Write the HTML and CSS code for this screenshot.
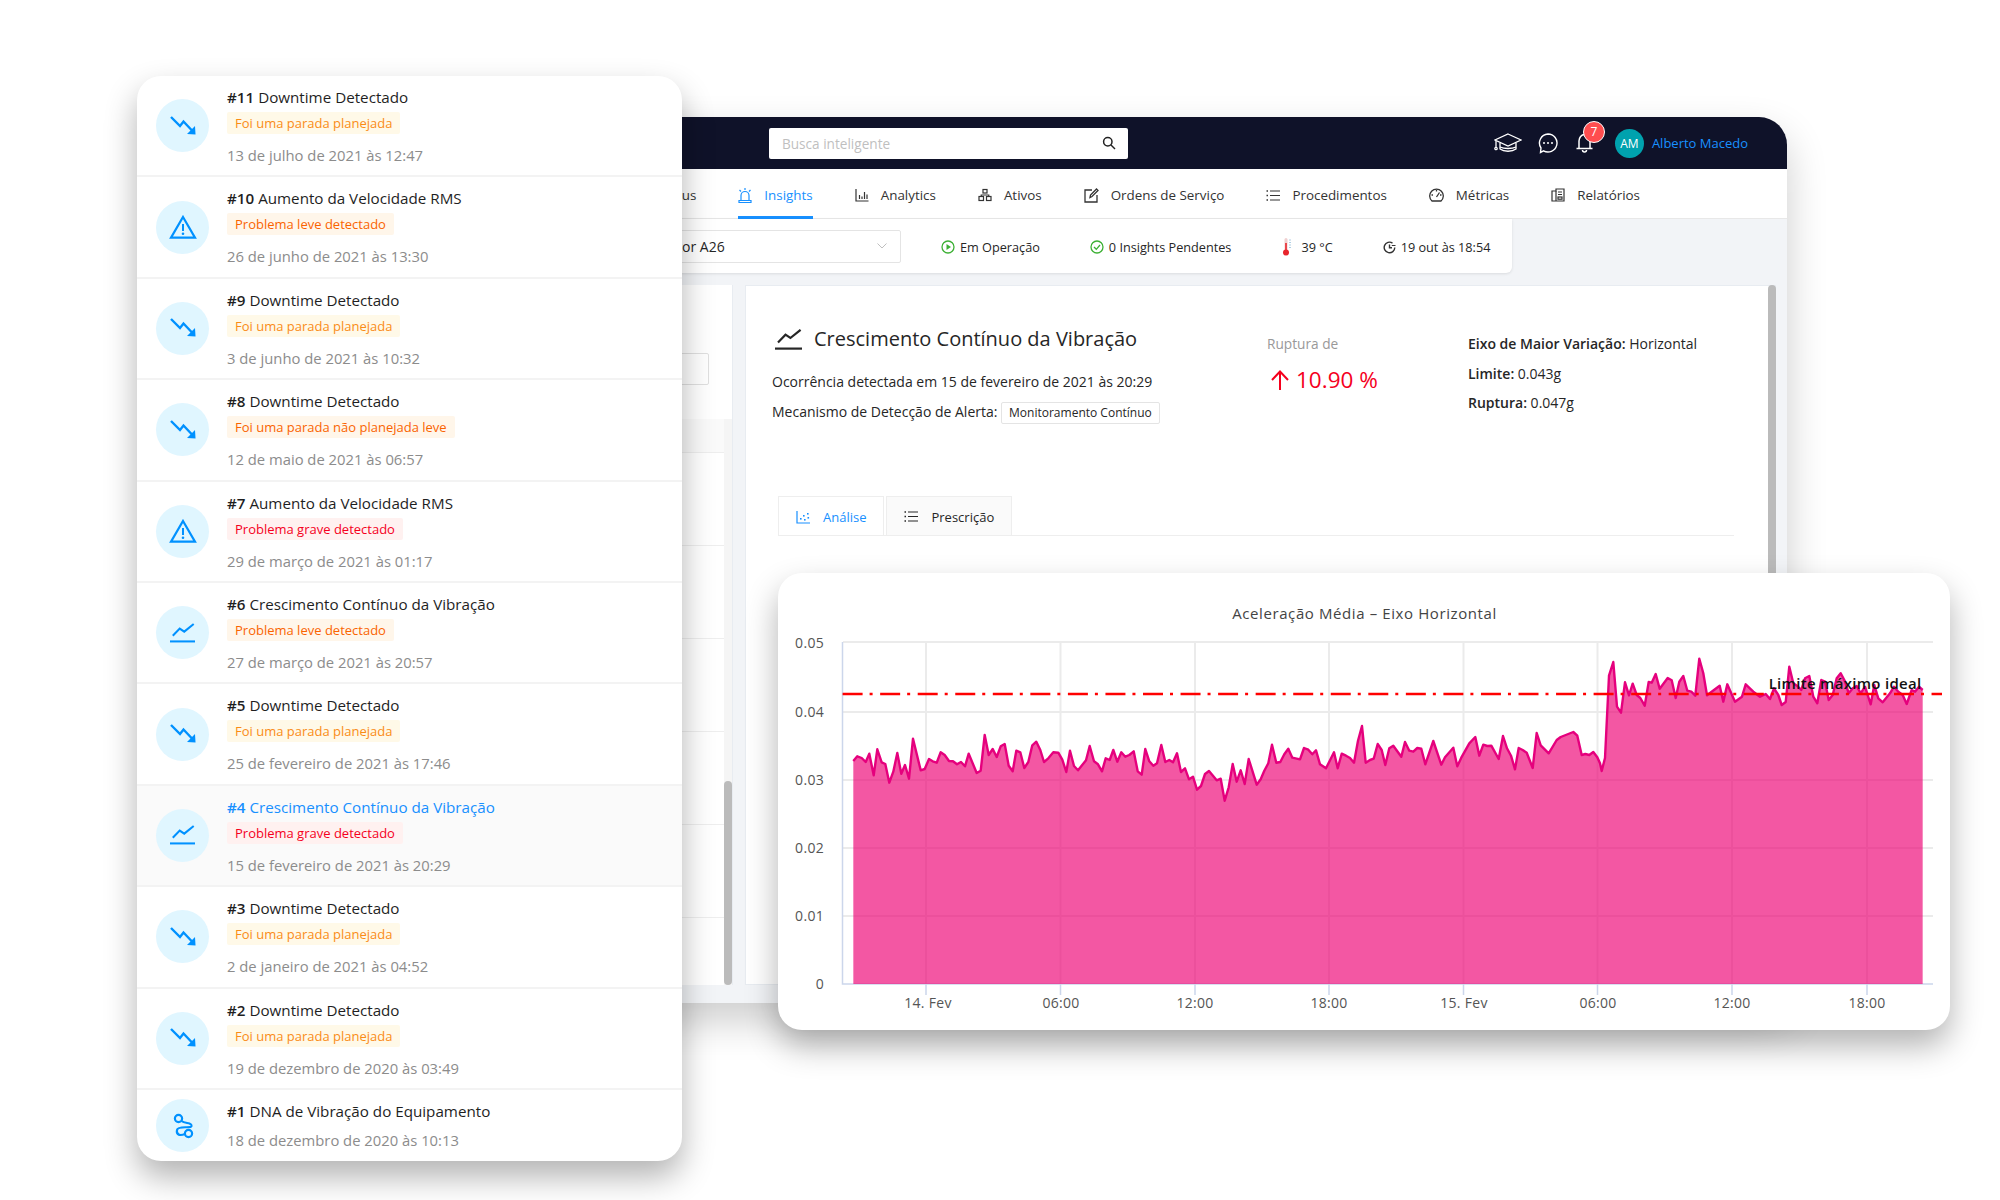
FILE: index.html
```html
<!DOCTYPE html>
<html lang="pt-BR">
<head>
    <meta charset="UTF-8">
    <title>Insights</title>
    <link rel="stylesheet" href="styles.css">
</head>
<body>
    <svg class="defs" width="0" height="0">
        <symbol id="i-down" viewBox="0 0 26 20">
            <polyline points="1,1 10,10 13.5,5.5 22,14.5" fill="none" stroke="currentColor" stroke-width="2.4"/>
            <polygon points="25.5,18.5 17,18 25,10" fill="currentColor"/>
        </symbol>
        <symbol id="i-warn" viewBox="0 0 28 24">
            <path d="M14 2 L26 22.6 H2 Z" fill="none" stroke="currentColor" stroke-width="2.2"/>
            <rect x="13" y="9" width="2" height="7" fill="currentColor"/>
            <circle cx="14" cy="18.8" r="1.3" fill="currentColor"/>
        </symbol>
        <symbol id="i-growth" viewBox="0 0 27 21">
            <path d="M0 19.6 H27" fill="none" stroke="currentColor" stroke-width="2.2"/>
            <polyline points="3,13.5 10.5,5.7 15.4,9 25.6,0.8" fill="none" stroke="currentColor" stroke-width="2.2"/>
        </symbol>
        <symbol id="i-dna" viewBox="0 0 22 26">
            <circle cx="6.5" cy="5.5" r="3.6" fill="none" stroke="currentColor" stroke-width="2.2"/>
            <circle cx="16.5" cy="20.5" r="3.6" fill="none" stroke="currentColor" stroke-width="2.2"/>
            <path d="M9.5 8 C13 11 20 9 19.5 13 C19 16 6 12 5 17 C4 22 8 23 13 21" fill="none" stroke="currentColor" stroke-width="2.2"/>
        </symbol>
    </svg>

    <!-- janela principal, atras da lista e do grafico -->
    <section class="dash">
        <header class="topbar">
            <div class="search">
                <span>Busca inteligente</span>
                <svg width="14" height="14" viewBox="0 0 14 14" fill="none" stroke="#222" stroke-width="1.5"><circle cx="5.8" cy="5.8" r="4.2"/><path d="M9 9 L13 13"/></svg>
            </div>
            <div class="topbar-right">
                <svg class="cap" width="28" height="20" viewBox="0 0 28 20" fill="none" stroke="#fff" stroke-width="1.3"><path d="M14 1 L27 7 L14 13 L1 7 Z"/><path d="M6 10 V16 C10 19 18 19 22 16 V10"/><path d="M6 14 C10 16 18 16 22 14"/><path d="M2 7.5 V14"/><circle cx="2" cy="15.5" r="1.2"/></svg>
                <svg class="chat" width="20" height="21" viewBox="0 0 20 21" fill="none" stroke="#fff" stroke-width="1.4"><path d="M10 1 A9 9 0 1 1 5.5 17.8 L2.5 19.5 L3 15 A9 9 0 0 1 10 1 Z"/><g fill="#fff" stroke="none"><circle cx="6" cy="10" r="1"/><circle cx="10" cy="10" r="1"/><circle cx="14" cy="10" r="1"/></g></svg>
                <div class="bell">
                    <svg width="17" height="20" viewBox="0 0 17 20" fill="none" stroke="#fff" stroke-width="1.5"><path d="M3 15 V8 A5.5 6.5 0 0 1 14 8 V15"/><path d="M0.5 15.5 H16.5"/><path d="M6.5 17 A2 2 0 0 0 10.5 17"/></svg>
                    <span class="badge">7</span>
                </div>
                <span class="avatar">AM</span>
                <span class="username">Alberto Macedo</span>
            </div>
        </header>

        <nav class="nav">
            <a class="nav-item">Status</a>
            <a class="nav-item active">
                <svg width="14" height="15" viewBox="0 0 14 15" fill="none" stroke="currentColor" stroke-width="1.2"><path d="M3 12 V7.5 A4 4 0 0 1 11 7.5 V12"/><path d="M1 12.5 H13 V14.5 H1 Z"/><path d="M7 0 V2 M1.5 2 L3 3.5 M12.5 2 L11 3.5"/></svg>
                Insights
            </a>
            <a class="nav-item">
                <svg width="14" height="14" viewBox="0 0 14 14" fill="none" stroke="currentColor" stroke-width="1.2"><path d="M1 1 V13 H13.5"/><path d="M4.5 11 V7 M7 11 V8.5 M9.5 11 V4 M12 11 V6.5"/></svg>
                Analytics
            </a>
            <a class="nav-item">
                <svg width="14" height="14" viewBox="0 0 14 14" fill="none" stroke="currentColor" stroke-width="1.2"><rect x="5" y="1.5" width="4" height="3.5"/><rect x="1" y="8.5" width="4.5" height="4"/><rect x="8.5" y="8.5" width="4.5" height="4"/><path d="M3.2 8.5 V7 H10.8 V8.5"/></svg>
                Ativos
            </a>
            <a class="nav-item">
                <svg width="15" height="15" viewBox="0 0 15 15" fill="none" stroke="currentColor" stroke-width="1.3"><path d="M8 2 H1 V14 H13 V7"/><path d="M6 9.5 L6.5 7 L12.5 1 L14 2.5 L8 8.5 Z"/></svg>
                Ordens de Serviço
            </a>
            <a class="nav-item">
                <svg width="14" height="13" viewBox="0 0 14 13" fill="none" stroke="currentColor" stroke-width="1.2"><path d="M4 2 H14 M4 6.5 H14 M4 11 H14"/><path d="M0.5 2 H2 M0.5 6.5 H2 M0.5 11 H2" stroke-width="1.6"/></svg>
                Procedimentos
            </a>
            <a class="nav-item">
                <svg width="15" height="14" viewBox="0 0 15 14" fill="none" stroke="currentColor" stroke-width="1.3"><path d="M3 13 A6.8 6.8 0 1 1 12 13 Z"/><path d="M7.5 9 L10.5 4.5"/><path d="M2.5 7 H4 M11 7 H12.5 M7.5 2 V3.5"/></svg>
                Métricas
            </a>
            <a class="nav-item">
                <svg width="14" height="14" viewBox="0 0 14 14" fill="none" stroke="currentColor" stroke-width="1.2"><path d="M5 3 H1 V13 H13 V1 H5 Z"/><path d="M5 3 V13"/><path d="M7 4 H11 M7 6.5 H11"/><rect x="7" y="9" width="4" height="2.2"/></svg>
                Relatórios
            </a>
        </nav>

        <div class="statusbar">
            <div class="select">
                <span>Motor A26</span>
                <svg width="10" height="6" viewBox="0 0 10 6" fill="none" stroke="#bfbfbf" stroke-width="1"><path d="M0.5 0.5 L5 5 L9.5 0.5"/></svg>
            </div>
            <div class="status">
                <svg width="14" height="14" viewBox="0 0 14 14" fill="none" stroke="#3cb034" stroke-width="1.3"><circle cx="7" cy="7" r="6"/><polygon points="5.5,4 10,7 5.5,10" fill="#3cb034" stroke="none"/></svg>
                Em Operação
            </div>
            <div class="status">
                <svg width="14" height="14" viewBox="0 0 14 14" fill="none" stroke="#3cb034" stroke-width="1.3"><circle cx="7" cy="7" r="6"/><path d="M4 7 L6.3 9.3 L10 5"/></svg>
                0 Insights Pendentes
            </div>
            <div class="status temp">
                <svg width="12" height="20" viewBox="0 0 12 20"><rect x="3.5" y="1" width="3" height="13" rx="1.5" fill="#f0d0d0"/><rect x="4.2" y="6" width="1.6" height="9" fill="#e8262d"/><circle cx="5" cy="15.5" r="3" fill="#e8262d"/><path d="M8 3 H10 M8 5.5 H10 M8 8 H10 M8 10.5 H10" stroke="#9cc3dd" stroke-width=".8"/></svg>
                39 °C
            </div>
            <div class="status">
                <svg width="13" height="13" viewBox="0 0 13 13" fill="none" stroke="#333" stroke-width="1.4"><path d="M11.8 6.5 A5.3 5.3 0 1 1 9.5 2.1"/><path d="M6.5 3.5 V6.8 H9"/><path d="M8.8 4.5 L12.5 4.5" stroke-width="1"/></svg>
                19 out às 18:54
            </div>
        </div>

        <div class="dash-body">
            <aside class="side">
                <div class="side-head"><div class="side-input"></div></div>
                <div class="side-table">
                    <div class="side-rows">
                        <div class="side-row first"></div>
                        <div class="side-row"></div>
                        <div class="side-row"></div>
                        <div class="side-row"></div>
                        <div class="side-row"></div>
                        <div class="side-row"></div>
                        <div class="side-row"></div>
                    </div>
                    <div class="track"><div class="thumb"></div></div>
                </div>
            </aside>

            <main class="detail">
                <div class="detail-bar"></div>
                <div class="detail-head">
                    <div>
                        <h1 class="detail-title"><svg width="27" height="21"><use href="#i-growth"/></svg>Crescimento Contínuo da Vibração</h1>
                        <p class="detail-line first">Ocorrência detectada em 15 de fevereiro de 2021 às 20:29</p>
                        <p class="detail-line">Mecanismo de Detecção de Alerta: <span class="mech">Monitoramento Contínuo</span></p>
                    </div>
                    <div class="rupture">
                        <div class="rupture-label">Ruptura de</div>
                        <div class="rupture-value">
                            <svg width="20" height="20" viewBox="0 0 20 20" fill="none" stroke="currentColor" stroke-width="2"><path d="M10 20 V2 M2 10 L10 1.5 L18 10"/></svg>
                            10.90 %
                        </div>
                    </div>
                    <div class="facts">
                        <p><b>Eixo de Maior Variação:</b> Horizontal</p>
                        <p><b>Limite:</b> 0.043g</p>
                        <p><b>Ruptura:</b> 0.047g</p>
                    </div>
                </div>
                <div class="tabs">
                    <div class="tab active">
                        <svg width="14" height="14" viewBox="0 0 14 14" fill="none" stroke="currentColor" stroke-width="1.2"><path d="M1 1 V13 H14"/><g fill="currentColor" stroke="none"><rect x="4" y="8" width="1.6" height="1.6"/><rect x="7" y="5" width="1.6" height="1.6"/><rect x="8" y="9" width="1.6" height="1.6"/><rect x="11" y="3" width="1.6" height="1.6"/><rect x="11.5" y="7" width="1.6" height="1.6"/></g></svg>
                        Análise
                    </div>
                    <div class="tab">
                        <svg width="14" height="13" viewBox="0 0 14 13" fill="none" stroke="currentColor" stroke-width="1.2"><path d="M4 2 H14 M4 6.5 H14 M4 11 H14"/><path d="M0.5 2 H2 M0.5 6.5 H2 M0.5 11 H2" stroke-width="1.6"/></svg>
                        Prescrição
                    </div>
                </div>
            </main>
        </div>
    </section>

    <!-- lista de insights -->
    <section class="insights">
        <article class="row">
            <div class="dot"><svg width="26" height="20"><use href="#i-down"/></svg></div>
            <div class="row-text">
                <h3><b>#11</b> Downtime Detectado</h3>
                <span class="tag plan">Foi uma parada planejada</span>
                <time>13 de julho de 2021 às 12:47</time>
            </div>
        </article>
        <article class="row">
            <div class="dot"><svg width="28" height="24"><use href="#i-warn"/></svg></div>
            <div class="row-text">
                <h3><b>#10</b> Aumento da Velocidade RMS</h3>
                <span class="tag light">Problema leve detectado</span>
                <time>26 de junho de 2021 às 13:30</time>
            </div>
        </article>
        <article class="row">
            <div class="dot"><svg width="26" height="20"><use href="#i-down"/></svg></div>
            <div class="row-text">
                <h3><b>#9</b> Downtime Detectado</h3>
                <span class="tag plan">Foi uma parada planejada</span>
                <time>3 de junho de 2021 às 10:32</time>
            </div>
        </article>
        <article class="row">
            <div class="dot"><svg width="26" height="20"><use href="#i-down"/></svg></div>
            <div class="row-text">
                <h3><b>#8</b> Downtime Detectado</h3>
                <span class="tag light">Foi uma parada não planejada leve</span>
                <time>12 de maio de 2021 às 06:57</time>
            </div>
        </article>
        <article class="row">
            <div class="dot"><svg width="28" height="24"><use href="#i-warn"/></svg></div>
            <div class="row-text">
                <h3><b>#7</b> Aumento da Velocidade RMS</h3>
                <span class="tag severe">Problema grave detectado</span>
                <time>29 de março de 2021 às 01:17</time>
            </div>
        </article>
        <article class="row">
            <div class="dot"><svg width="25" height="20"><use href="#i-growth"/></svg></div>
            <div class="row-text">
                <h3><b>#6</b> Crescimento Contínuo da Vibração</h3>
                <span class="tag light">Problema leve detectado</span>
                <time>27 de março de 2021 às 20:57</time>
            </div>
        </article>
        <article class="row">
            <div class="dot"><svg width="26" height="20"><use href="#i-down"/></svg></div>
            <div class="row-text">
                <h3><b>#5</b> Downtime Detectado</h3>
                <span class="tag plan">Foi uma parada planejada</span>
                <time>25 de fevereiro de 2021 às 17:46</time>
            </div>
        </article>
        <article class="row selected">
            <div class="dot"><svg width="25" height="20"><use href="#i-growth"/></svg></div>
            <div class="row-text">
                <h3><b>#4</b> Crescimento Contínuo da Vibração</h3>
                <span class="tag severe">Problema grave detectado</span>
                <time>15 de fevereiro de 2021 às 20:29</time>
            </div>
        </article>
        <article class="row">
            <div class="dot"><svg width="26" height="20"><use href="#i-down"/></svg></div>
            <div class="row-text">
                <h3><b>#3</b> Downtime Detectado</h3>
                <span class="tag plan">Foi uma parada planejada</span>
                <time>2 de janeiro de 2021 às 04:52</time>
            </div>
        </article>
        <article class="row">
            <div class="dot"><svg width="26" height="20"><use href="#i-down"/></svg></div>
            <div class="row-text">
                <h3><b>#2</b> Downtime Detectado</h3>
                <span class="tag plan">Foi uma parada planejada</span>
                <time>19 de dezembro de 2020 às 03:49</time>
            </div>
        </article>
        <article class="row last">
            <div class="dot"><svg width="22" height="26"><use href="#i-dna"/></svg></div>
            <div class="row-text">
                <h3><b>#1</b> DNA de Vibração do Equipamento</h3>
                <time>18 de dezembro de 2020 às 10:13</time>
            </div>
        </article>
    </section>

    <!-- cartao do grafico -->
    <section class="chart-card">
        <svg id="chart" width="1172" height="457" viewBox="778 573 1172 457">
            <text class="chart-title" x="1364.5" y="619" text-anchor="middle">Aceleração Média – Eixo Horizontal</text>
            <g class="grid">
                <path d="M843 642 H1933 M843 712 H1933 M843 780 H1933 M843 848 H1933 M843 916 H1933"/>
                <path d="M926 642 V984 M1060.5 642 V984 M1195 642 V984 M1329 642 V984 M1463.5 642 V984 M1597.5 642 V984 M1732 642 V984 M1867 642 V984"/>
            </g>
            <g class="axis">
                <path d="M842.5 642 V984 H1933"/>
                <path d="M926 984 V995 M1060.5 984 V995 M1195 984 V995 M1329 984 V995 M1463.5 984 V995 M1597.5 984 V995 M1732 984 V995 M1867 984 V995"/>
            </g>
            <g class="labels" text-anchor="end">
                <text x="824" y="648">0.05</text>
                <text x="824" y="717">0.04</text>
                <text x="824" y="785">0.03</text>
                <text x="824" y="853">0.02</text>
                <text x="824" y="921">0.01</text>
                <text x="824" y="989">0</text>
            </g>
            <g class="labels" text-anchor="middle">
                <text x="928" y="1008">14. Fev</text>
                <text x="1061" y="1008">06:00</text>
                <text x="1195" y="1008">12:00</text>
                <text x="1329" y="1008">18:00</text>
                <text x="1464" y="1008">15. Fev</text>
                <text x="1598" y="1008">06:00</text>
                <text x="1732" y="1008">12:00</text>
                <text x="1867" y="1008">18:00</text>
            </g>
            <path id="area" class="area"/>
            <polyline id="trace" class="trace"/>
            <path class="limit" d="M842.6 694 H1942"/>
            <text class="limit-label" x="1921.5" y="689" text-anchor="end">Limite máximo ideal</text>
        </svg>
    </section>

    <script src="chart.js"></script>
</body>
</html>
```

FILE: styles.css
```css
* {
    box-sizing: border-box;
}

body {
    position: relative;
    width: 2000px;
    height: 1200px;
    margin: 0;
    overflow: hidden;
    background-color: white;
    font-family: 'Open Sans', 'Noto Sans', sans-serif;
    font-size: 13px;
    color: #262626;
}

h1, h3, p {
    margin: 0;
    font-weight: normal;
}

.defs {
    position: absolute;
}

/* janela principal */
.dash {
    position: absolute;
    left: 400px;
    top: 117px;
    width: 1387px;
    height: 886px;
    display: flex;
    flex-direction: column;
    background-color: #f2f4f7;
    border-radius: 28px 28px 0 0;
    overflow: hidden;
    box-shadow: 0 18px 40px rgba(0,0,0,0.2);
}

.topbar {
    height: 52px;
    flex: none;
    display: flex;
    align-items: center;
    padding-left: 369px;
    padding-right: 39px;
    background-color: #0f1229;
}

.search {
    width: 359px;
    height: 31px;
    display: flex;
    align-items: center;
    justify-content: space-between;
    padding: 0 12px 0 13px;
    background-color: white;
    border-radius: 2px;
    color: #bfbfbf;
    font-size: 13.6px;
}

.search span {
    margin-top: 1px;
}

.topbar-right {
    margin-left: auto;
    display: flex;
    align-items: center;
}

.chat {
    margin-left: 16px;
}

.bell {
    position: relative;
    height: 20px;
    margin-left: 18px;
}

.badge {
    position: absolute;
    left: 7px;
    top: -12px;
    width: 22px;
    height: 22px;
    border: 1px solid white;
    border-radius: 50%;
    background-color: #ff4d4f;
    color: white;
    font-size: 12px;
    line-height: 20px;
    text-align: center;
}

.avatar {
    width: 29px;
    height: 29px;
    margin-left: 22px;
    border-radius: 50%;
    background-color: #00a2ae;
    color: white;
    font-size: 12px;
    line-height: 29px;
    text-align: center;
}

.username {
    margin-left: 8px;
    color: #1890ff;
}

.nav {
    height: 50px;
    flex: none;
    display: flex;
    justify-content: flex-end;
    gap: 42px;
    padding-right: 147px;
    background-color: white;
    border-bottom: 1px solid #e8e8e8;
    font-size: 13.4px;
}

.nav-item {
    display: flex;
    align-items: center;
    gap: 12px;
    height: 50px;
    padding-top: 2px;
    color: #333;
}

.nav-item.active {
    color: #1890ff;
    border-bottom: 3px solid #1890ff;
    padding-top: 5px;
}

.statusbar {
    width: 1112px;
    height: 54px;
    flex: none;
    display: flex;
    align-items: center;
    gap: 50px;
    padding: 0 21px 0 0;
    background-color: white;
    border-radius: 0 0 6px 0;
    box-shadow: 0 1px 3px rgba(0,0,0,0.1);
}

.select {
    width: 501px;
    height: 33px;
    margin-right: -10px;
    display: flex;
    align-items: center;
    justify-content: space-between;
    padding: 0 13px 0 255px;
    border: 1px solid #e4e4e4;
    border-radius: 2px;
    font-size: 14px;
}

.status {
    display: flex;
    align-items: center;
    gap: 5px;
    margin-top: 2px;
    font-size: 12.7px;
    white-space: nowrap;
}

.status.temp {
    gap: 8px;
}

.dash-body {
    flex: 1;
    min-height: 0;
    display: flex;
    gap: 12px;
    padding: 12px 11px 18px 0;
}

/* coluna esquerda, quase toda coberta pela lista */
.side {
    width: 333px;
    min-height: 0;
    display: flex;
    flex-direction: column;
    background-color: white;
    border-right: 1px solid #e8ecf1;
}

.side-head {
    height: 134px;
    flex: none;
    padding: 68px 23px 0 0;
}

.side-input {
    height: 32px;
    border: 1px solid #e0e0e0;
    border-radius: 2px;
}

.side-table {
    flex: 1;
    min-height: 0;
    display: flex;
}

.side-rows {
    flex: 1;
    overflow: hidden;
}

.side-row {
    height: 93px;
    border-bottom: 1px solid #eee;
}

.side-row.first {
    height: 34px;
    background-color: #fafafa;
}

.track {
    width: 8px;
    display: flex;
    flex-direction: column;
    justify-content: flex-end;
    background-color: #f5f5f5;
}

.thumb {
    height: 204px;
    border-radius: 4px;
    background-color: #bbb;
}

.detail {
    position: relative;
    flex: 1;
    padding: 39px 0 0 26px;
    background-color: white;
    border: 1px solid #e8ecf1;
}

.detail-bar {
    position: absolute;
    right: -1px;
    top: -1px;
    width: 8px;
    height: 400px;
    border-radius: 4px;
    background-color: #bbb;
}

.detail-head {
    display: grid;
    grid-template-columns: 495px 201px 1fr;
    height: 171px;
}

.detail-title {
    display: flex;
    align-items: center;
    gap: 12px;
    padding-left: 3px;
    font-size: 20px;
    line-height: 28px;
}

.detail-line {
    font-size: 14px;
    line-height: 24px;
    font-weight: 500;
    white-space: nowrap;
}

.detail-line.first {
    margin-top: 17px;
    margin-bottom: 6px;
}

.mech {
    display: inline-block;
    height: 22px;
    padding: 0 7px;
    border: 1px solid #e4e4e4;
    border-radius: 2px;
    font-size: 12px;
    line-height: 20px;
}

.rupture {
    padding-top: 9px;
}

.rupture-label {
    color: #999;
    font-size: 13.7px;
    line-height: 20px;
}

.rupture-value {
    display: flex;
    align-items: center;
    gap: 6px;
    margin-top: 10px;
    padding-left: 3px;
    color: #f5001d;
    font-size: 22.5px;
    line-height: 32px;
    white-space: nowrap;
}

.facts {
    padding-top: 9px;
    font-size: 14px;
}

.facts p {
    line-height: 20px;
    margin-bottom: 9.5px;
    white-space: nowrap;
}

.facts b {
    font-weight: 600;
}

.tabs {
    display: flex;
    gap: 2px;
    height: 40px;
    margin: 0 41px 0 6px;
    border-bottom: 1px solid #eee;
}

.tab {
    display: flex;
    align-items: center;
    gap: 13px;
    padding: 1px 17px 0;
    background-color: #fafafa;
    border: 1px solid #eee;
    border-bottom: none;
}

.tab.active {
    background-color: white;
    color: #1890ff;
}

/* lista de insights */
.insights {
    position: absolute;
    left: 137px;
    top: 76px;
    width: 545px;
    height: 1085px;
    background-color: white;
    border-radius: 24px;
    overflow: hidden;
    box-shadow: 0 16px 32px rgba(0,0,0,0.3);
}

.row {
    height: 101.4px;
    display: flex;
    align-items: center;
    gap: 18px;
    padding: 0 19px;
    border-bottom: 2px solid #f3f3f3;
}

.row.selected {
    background-color: #fafafa;
}

.row.selected h3 {
    color: #1890ff;
}

.row.last {
    height: 72px;
    border-bottom: none;
}

.dot {
    width: 53px;
    height: 53px;
    flex: none;
    display: flex;
    align-items: center;
    justify-content: center;
    border-radius: 50%;
    background-color: #e0f6ff;
    color: #0091ff;
}

.row-text {
    align-self: flex-start;
    display: flex;
    flex-direction: column;
    align-items: flex-start;
    padding-top: 9px;
}

.row-text h3 {
    font-size: 15.2px;
    line-height: 24px;
    color: #1f1f1f;
}

.row-text b {
    font-weight: 600;
}

.row-text time {
    margin-top: 10px;
    font-size: 14.8px;
    line-height: 22px;
    color: #8c8c8c;
}

.row.last time {
    margin-top: 6px;
}

.tag {
    height: 22px;
    margin-top: 3px;
    padding: 0 8px;
    border-radius: 2px;
    font-size: 13px;
    line-height: 22px;
}

.tag.plan {
    background-color: #fff9e8;
    color: #fa8c16;
}

.tag.light {
    background-color: #fff6ea;
    color: #fa6400;
}

.tag.severe {
    background-color: #fff1f0;
    color: #f5001d;
}

/* cartao do grafico */
.chart-card {
    position: absolute;
    left: 778px;
    top: 573px;
    width: 1172px;
    height: 457px;
    background-color: white;
    border-radius: 24px;
    box-shadow: 0 16px 32px rgba(0,0,0,0.3);
}

#chart {
    display: block;
}

.chart-title {
    fill: #444;
    font-size: 15px;
    letter-spacing: 0.6px;
}

.grid path {
    fill: none;
    stroke: #ebebeb;
    stroke-width: 2;
}

.axis path {
    fill: none;
    stroke: #ccd6eb;
    stroke-width: 1.5;
}

.labels text {
    fill: #555;
    font-size: 14px;
    letter-spacing: 0.3px;
}

.area {
    fill: #ed0074;
    fill-opacity: 0.66;
}

.trace {
    fill: none;
    stroke: #e5007d;
    stroke-width: 2.4;
    stroke-linejoin: round;
}

.limit {
    fill: none;
    stroke: #ff0000;
    stroke-width: 2.5;
    stroke-dasharray: 20 7 3 7.55;
}

.limit-label {
    fill: #111;
    font-size: 15px;
    font-weight: 600;
    letter-spacing: 0.3px;
}
```

FILE: chart.js
```js
// pontos lidos em tres trechos, cada um com origem propria e escala 3
const stretches = [
    { x: 850, y: 700, pts: [10,183, 22,169, 35,174, 47,186, 58,161, 71,226, 82,148, 95,187, 106,192, 118,248, 130,215, 142,159, 154,221, 165,195, 177,236, 189,116, 212,211, 224,207, 237,177, 248,184, 260,188, 272,157, 284,165, 297,183, 309,184, 321,193, 333,186, 345,199, 356,161, 380,219, 392,212, 404,105, 416,165, 428,147, 440,171, 452,139, 464,132, 476,197, 488,214, 499,152, 511,157, 523,204, 535,186, 547,136, 559,125, 571,150, 582,186, 595,175, 610,157, 625,158, 637,179, 649,216, 660,152, 672,198, 684,211, 696,196, 708,181, 719,138, 732,184, 744,193, 756,214, 767,175, 779,180, 790,150, 802,185, 814,157, 826,170, 838,165, 851,154, 863,214, 875,224, 886,147, 898,184, 910,197, 921,190, 934,135, 946,186, 958,180, 969,187, 981,160, 993,216, 1005,205, 1017,238, 1029,230, 1041,269, 1053,258, 1065,222, 1077,213] },
    { x: 1200, y: 700, pts: [50,241, 62,236, 74,302, 86,262, 98,192, 110,245, 122,211, 134,252, 146,177, 170,254, 182,238, 193,212, 205,190, 216,134, 229,188, 241,186, 253,163, 265,146, 277,173, 300,178, 312,144, 325,149, 337,163, 348,151, 360,193, 378,205, 402,157, 413,205, 425,161, 438,167, 450,174, 462,188, 474,122, 486,78, 497,188, 510,180, 521,176, 533,132, 545,150, 556,195, 568,145, 580,137, 604,170, 615,126, 628,152, 640,155, 652,144, 664,146, 676,193, 700,123, 724,194, 735,172, 760,143, 772,199, 784,173, 808,130, 826,111, 838,167, 850,134, 862,138, 874,137, 896,177, 909,108, 921,145, 933,167, 945,208, 956,144, 968,150, 980,158, 998,204, 1010,99, 1022,136, 1046,160, 1070,120, 1082,111, 1120,96, 1132,107, 1145,165, 1156,162, 1168,165, 1180,156, 1192,172, 1200,190, 1205,213, 1215,174] },
    { x: 1590, y: 650, pts: [57,77, 70,36, 81,170, 93,188, 105,97, 117,136, 128,101, 140,135, 151,144, 164,167, 176,96, 185,98, 197,72, 209,116, 233,84, 245,91, 257,144, 268,95, 280,78, 292,122, 304,125, 316,137, 328,26, 340,70, 351,136, 375,118, 389,107, 400,155, 412,103, 435,155, 456,140, 467,103, 490,125, 510,140, 527,132, 540,147, 552,115, 565,135, 575,165, 587,156, 598,50, 610,100, 622,108, 634,120, 645,85, 658,78, 670,140, 682,160, 694,90, 705,95, 716,150, 728,135, 740,85, 752,70, 764,92, 776,130, 788,115, 800,108, 812,130, 825,110, 842,163, 853,105, 865,145, 878,157, 900,130, 912,110, 925,125, 938,135, 950,162, 965,120, 975,125, 987,110, 998,120] }
];

const baseline = 984;
const points = [];

stretches.forEach(s => {
    for (let i = 0; i < s.pts.length; i += 2) {
        points.push([s.x + s.pts[i] / 3, s.y + s.pts[i + 1] / 3]);
    }
});

const line = points.map(p => p[0].toFixed(1) + ',' + p[1].toFixed(1)).join(' ');
const first = points[0];
const last = points[points.length - 1];

document.getElementById('trace').setAttribute('points', line);
document.getElementById('area').setAttribute('d', 'M' + first[0] + ' ' + baseline + ' L' + line + ' L' + last[0] + ' ' + baseline + ' Z');
```
